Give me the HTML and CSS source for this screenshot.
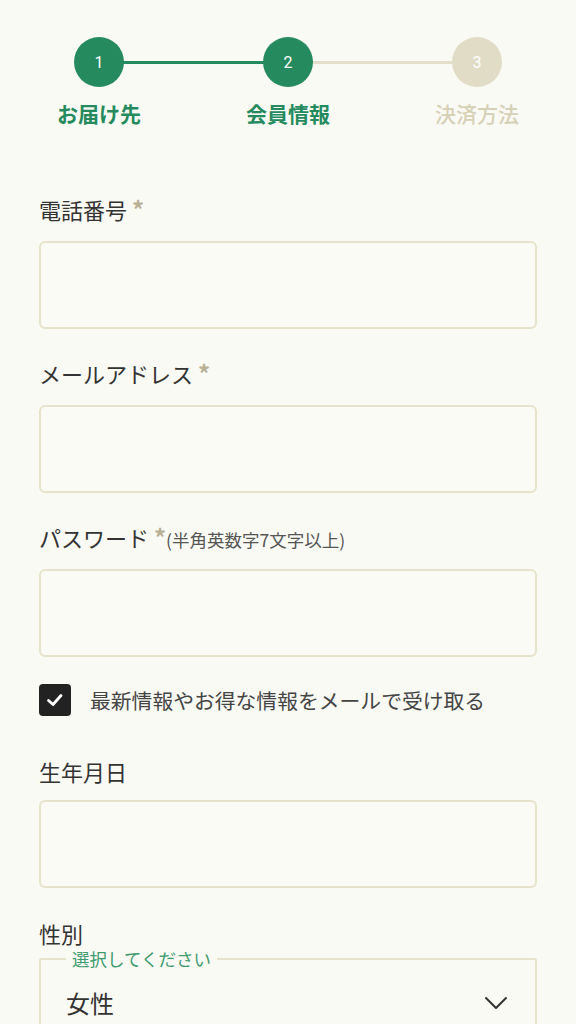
FILE: index.html
```html
<!DOCTYPE html>
<html lang="ja">
<head>
<meta charset="utf-8">
<link rel="stylesheet" href="styles.css">
</head>
<body>
<div class="stepper">
  <div class="step done">
    <div class="circle">1</div>
    <div class="step-label">お届け先</div>
  </div>
  <div class="step current">
    <div class="circle">2</div>
    <div class="step-label">会員情報</div>
  </div>
  <div class="step todo">
    <div class="circle">3</div>
    <div class="step-label">決済方法</div>
  </div>
</div>

<form class="form">
  <div class="field">
    <label class="label">電話番号 <span class="req">*</span></label>
    <div class="input"></div>
  </div>
  <div class="field">
    <label class="label">メールアドレス <span class="req">*</span></label>
    <div class="input"></div>
  </div>
  <div class="field">
    <label class="label">パスワード <span class="req">*</span><span class="note">(半角英数字7文字以上)</span></label>
    <div class="input"></div>
  </div>
  <div class="check-row">
    <span class="checkbox">
      <svg width="20" height="20" viewBox="0 0 20 20"><path d="M3.5 10.5 L8 14.5 L16 5.5" fill="none" stroke="#fff" stroke-width="2.8" stroke-linecap="round" stroke-linejoin="round"/></svg>
    </span>
    <span class="check-text">最新情報やお得な情報をメールで受け取る</span>
  </div>
  <div class="field birth">
    <label class="label">生年月日</label>
    <div class="input"></div>
  </div>
  <div class="field gender">
    <label class="label">性別</label>
    <fieldset class="select">
      <legend>選択してください</legend>
      <div class="select-row">
        <span class="select-value">女性</span>
        <svg class="chevron" width="26" height="16" viewBox="0 0 26 16"><path d="M3 3 L13 13 L23 3" fill="none" stroke="#333" stroke-width="2" stroke-linecap="round" stroke-linejoin="round"/></svg>
      </div>
    </fieldset>
  </div>
</form>
</body>
</html>
```
FILE: styles.css
```css
* { box-sizing: border-box; }
html, body { margin: 0; padding: 0; }
body {
  background: #fafaf4;
  font-family: "Noto Sans CJK JP", "Noto Sans", Roboto, sans-serif;
  color: #333;
  width: 576px;
  height: 1024px;
  overflow: hidden;
}
.stepper {
  display: grid;
  grid-template-columns: repeat(3, 189px);
  justify-content: center;
  padding-top: 37px;
}
.step {
  position: relative;
  display: flex;
  flex-direction: column;
  align-items: center;
}
.step::after {
  content: "";
  position: absolute;
  left: 50%;
  top: 24px;
  width: 189px;
  height: 3px;
  background: #e3dfc9;
  z-index: 0;
}
.step.done::after { background: #258a5d; }
.step.todo::after { display: none; }
.circle {
  position: relative;
  z-index: 1;
  width: 50px;
  height: 50px;
  border-radius: 50%;
  background: #258a5d;
  color: #fff;
  font-family: Roboto, sans-serif;
  font-size: 16px;
  display: flex;
  align-items: center;
  justify-content: center;
}
.step.todo .circle { background: #e0dcc5; }
.step-label {
  margin-top: 12px;
  font-size: 21px;
  line-height: 28px;
  font-weight: 700;
  color: #258a5d;
}
.step.todo .step-label { color: #d6d1b6; font-weight: 500; }

.form {
  padding: 67px 39px 0;
  display: flex;
  flex-direction: column;
}
.field { margin-bottom: 29px; }
.label {
  display: block;
  font-size: 22px;
  line-height: 30px;
  height: 30px;
  margin-bottom: 17px;
  color: #333;
}
.req {
  color: #b8b194;
  font-size: 24px;
  font-weight: 700;
  line-height: 1;
}
.note { font-size: 17.5px; color: #555; line-height: 1; }
.input {
  height: 88px;
  border: 2px solid #e7e3cb;
  border-radius: 6px;
  background: #fbfbf6;
}
.check-row {
  display: flex;
  align-items: center;
  gap: 19px;
  margin-top: -2px;
  margin-bottom: 40px;
}
.checkbox {
  flex: none;
  width: 32px;
  height: 32px;
  border-radius: 4px;
  background: #222;
  display: flex;
  align-items: center;
  justify-content: center;
}
.check-text { font-size: 20.8px; color: #444; }
.birth .label { margin-bottom: 14px; }
.gender { margin-top: 1px; }
.gender .label { margin-bottom: 0; }
.select {
  margin: 0;
  padding: 15px 26px 0 25px;
  border: 2px solid #e7e3cb;
  border-radius: 2px;
  height: 140px;
}
.select legend {
  margin-left: 0;
  padding: 0 6px;
  font-size: 17.5px;
  line-height: 22px;
  color: #3f9a6e;
}
.select-row {
  display: flex;
  align-items: center;
  justify-content: space-between;
}
.select-value { font-size: 24px; color: #333; }
```
